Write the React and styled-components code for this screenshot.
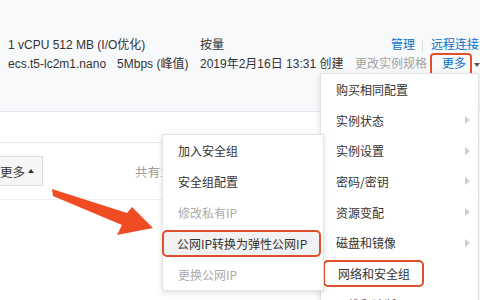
import React from 'react'
import styled, { createGlobalStyle } from 'styled-components'

const GlobalStyle = createGlobalStyle`
    html, body {
        margin: 0;
        padding: 0;
        background: #ffffff;
    }
    body {
        font-family: "Liberation Sans", "Noto Sans CJK SC", sans-serif;
        color: #333333;
    }
`

const Page = styled.div`
    position: relative;
    width: 480px;
    height: 300px;
    overflow: hidden;
    background: #ffffff;
`

const TableRow = styled.div`
    display: grid;
    grid-template-columns: 192px 155px 1fr;
    height: 112px;
    padding: 36px 0 0 8px;
    box-sizing: border-box;
    background: #f8f9fb;
    border-bottom: 1px solid #e6e8eb;
    font-size: 12px;
    line-height: 19px;
`

const Cell = styled.div`
    display: flex;
    flex-direction: column;
    white-space: nowrap;
`

const Spaced = styled.span`
    margin-left: 11px;
`

const Actions = styled.div`
    display: flex;
    flex-direction: column;
    align-items: flex-end;
    min-width: 0;
    white-space: nowrap;
`

const ActionLine = styled.div`
    display: flex;
    align-items: center;
    height: 19px;
    padding-right: ${(p) => p.$pr || 0}px;
`

const Link = styled.span`
    color: ${(p) => (p.$muted ? '#a3a3a3' : '#0b6fc8')};
`

const Sep = styled.span`
    width: 1px;
    height: 12px;
    background: #d9d9d9;
    margin: 0 8px 0 7px;
`

const Boxed = styled.span`
    display: inline-flex;
    align-items: center;
    height: 19px;
    padding: 0 4px 0 10px;
    margin-left: 3px;
    border: 2px solid #e0502c;
    border-radius: 4px;
    color: #0b6fc8;
`

const Caret = styled.span`
    width: 0;
    height: 0;
    margin-left: 2px;
    border-left: 3px solid transparent;
    border-right: 3px solid transparent;
    border-top: 4px solid #555;
`

const BlankRow = styled.div`
    height: 30px;
    border-bottom: 1px solid #e9e9e9;
`

const Toolbar = styled.div`
    display: flex;
    align-items: center;
    height: 56px;
    border-bottom: 1px solid #efefef;
    font-size: 12.5px;
`

const ToolButton = styled.div`
    display: flex;
    align-items: center;
    height: 30px;
    width: 52px;
    margin-left: -9px;
    padding-left: 8px;
    box-sizing: border-box;
    background: #f6f6f6;
    border: 1px solid #dcdcdc;
    color: #333;
`

const UpCaret = styled.span`
    width: 0;
    height: 0;
    margin-left: 3px;
    border-left: 3px solid transparent;
    border-right: 3px solid transparent;
    border-bottom: 4px solid #333;
`

const Total = styled.span`
    margin-left: 92px;
    color: #9a9a9a;
`

const Menu = styled.div`
    position: absolute;
    left: ${(p) => p.$left}px;
    top: ${(p) => p.$top}px;
    width: ${(p) => p.$width}px;
    background: #ffffff;
    border: 1px solid #e3e3e3;
    box-shadow: 0 2px 6px rgba(0, 0, 0, 0.12);
    z-index: ${(p) => p.$z || 1};
    font-family: "Noto Sans CJK SC", "Liberation Sans", sans-serif;
    font-size: 12px;
`

const Item = styled.div`
    display: flex;
    align-items: center;
    justify-content: space-between;
    height: ${(p) => p.$h}px;
    padding-right: 8px;
    color: ${(p) => (p.$disabled ? '#ababab' : '#333333')};
`

const Label = styled.span`
    display: flex;
    align-items: center;
    white-space: nowrap;
    height: 27px;
    box-sizing: border-box;
    padding: ${(p) => (p.$boxed ? `0 12px 0 ${p.$pad - 2}px` : `0 0 0 ${p.$pad}px`)};
    margin-left: ${(p) => (p.$boxed ? p.$shift : 0)}px;
    border: ${(p) => (p.$boxed ? '2px solid #df4f2b' : 'none')};
    border-radius: 5px;
    background: ${(p) => (p.$boxed && p.$fill ? '#f2f2f2' : 'transparent')};
    flex: ${(p) => (p.$fill ? 1 : 'none')};
    margin-right: ${(p) => (p.$fill ? 6 : 0)}px;
`

const Chevron = styled.span`
    width: 0;
    height: 0;
    border-top: 4px solid transparent;
    border-bottom: 4px solid transparent;
    border-left: 5px solid #cfcfcf;
`

const Arrow = styled.svg`
    position: absolute;
    left: 0;
    top: 0;
    z-index: 3;
    pointer-events: none;
`

const mainItems = [
    { label: '购买相同配置' },
    { label: '实例状态', sub: true },
    { label: '实例设置', sub: true },
    { label: '密码/密钥', sub: true },
    { label: '资源变配', sub: true },
    { label: '磁盘和镜像', sub: true },
    { label: '网络和安全组', boxed: true },
    { label: '运维和诊断', sub: true },
]

const subItems = [
    { label: '加入安全组' },
    { label: '安全组配置' },
    { label: '修改私有IP', disabled: true },
    { label: '公网IP转换为弹性公网IP', boxed: true },
    { label: '更换公网IP', disabled: true },
]

const App = () => {
    return (
        <Page>
            <GlobalStyle />
            <TableRow>
                <Cell>
                    <span>1 vCPU 512 MB (I/O优化)</span>
                    <span>
                        ecs.t5-lc2m1.nano<Spaced>5Mbps (峰值)</Spaced>
                    </span>
                </Cell>
                <Cell>
                    <span>按量</span>
                    <span>2019年2月16日 13:31 创建</span>
                </Cell>
                <Actions>
                    <ActionLine $pr={1}>
                        <Link>管理</Link>
                        <Sep />
                        <Link>远程连接</Link>
                    </ActionLine>
                    <ActionLine>
                        <Link $muted>更改实例规格</Link>
                        <Boxed>更多</Boxed>
                        <Caret />
                    </ActionLine>
                </Actions>
            </TableRow>
            <BlankRow />
            <Toolbar>
                <ToolButton>
                    更多<UpCaret />
                </ToolButton>
                <Total>共有1条</Total>
            </Toolbar>

            <Menu $left={320} $top={73} $width={157} $z={1}>
                {mainItems.map((item) => (
                    <Item key={item.label} $h={30.7}>
                        <Label $pad={15} $boxed={item.boxed} $shift={2}>
                            {item.label}
                        </Label>
                        {item.sub && <Chevron />}
                    </Item>
                ))}
            </Menu>

            <Menu $left={162} $top={134} $width={160} $z={2}>
                {subItems.map((item) => (
                    <Item key={item.label} $h={31} $disabled={item.disabled}>
                        <Label $pad={15} $boxed={item.boxed} $fill={item.boxed} $shift={-1}>
                            {item.label}
                        </Label>
                    </Item>
                ))}
            </Menu>

            <Arrow width="480" height="300" viewBox="0 0 480 300">
                <polygon
                    points="52,189 127,213 132,207 153,228 117,235 122,225 53,196"
                    fill="#f04c24"
                />
            </Arrow>
        </Page>
    )
}

export default App
